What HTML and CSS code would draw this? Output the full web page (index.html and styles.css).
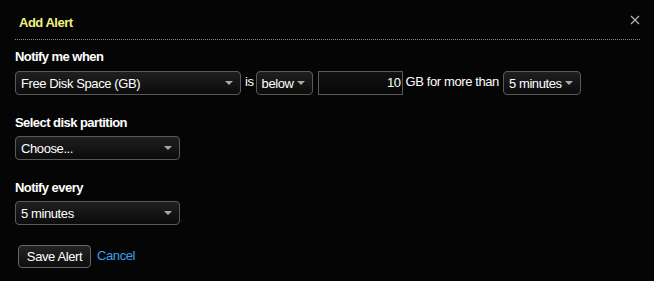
FILE: index.html
```html
<!DOCTYPE html>
<html>
<head>
<meta charset="utf-8">
<link rel="stylesheet" href="styles.css">
</head>
<body>
<div class="modal">
  <div class="header">
    <span class="title">Add Alert</span>
    <svg class="close" width="10" height="10" viewBox="0 0 10 10"><path d="M1 1L9 9M9 1L1 9" stroke="#b0b0b0" stroke-width="1.3"/></svg>
  </div>
  <div class="content">
    <div class="label first">Notify me when</div>
    <div class="row">
      <div class="select w-metric"><span>Free Disk Space (GB)</span><i class="arrow"></i></div>
      <span class="txt is">is</span>
      <div class="select w-op"><span>below</span><i class="arrow"></i></div>
      <div class="input">10</div>
      <span class="txt gb">GB for more than</span>
      <div class="select w-dur"><span>5 minutes</span><i class="arrow"></i></div>
    </div>
    <div class="label">Select disk partition</div>
    <div class="row">
      <div class="select w-wide"><span>Choose...</span><i class="arrow"></i></div>
    </div>
    <div class="label">Notify every</div>
    <div class="row">
      <div class="select w-wide"><span>5 minutes</span><i class="arrow"></i></div>
    </div>
    <div class="actions">
      <div class="btn">Save Alert</div>
      <a class="cancel">Cancel</a>
    </div>
  </div>
</div>
</body>
</html>
```
FILE: styles.css
```css
html, body {
  margin: 0;
  padding: 0;
  background: #050505;
  width: 654px;
  height: 281px;
  overflow: hidden;
}
.modal {
  font-family: "Liberation Sans", Arial, sans-serif;
  font-size: 13px;
  letter-spacing: -0.4px;
  color: #fff;
  white-space: nowrap;
}
.header {
  margin: 0 14px 0 15px;
  border-bottom: 1px dotted #8a8a8a;
  display: flex;
  align-items: flex-start;
  justify-content: space-between;
  box-sizing: border-box;
  height: 40px;
}
.title {
  color: #eef27c;
  font-weight: bold;
  letter-spacing: -0.5px;
  margin: 15px 0 0 4px;
  line-height: 16px;
}
.close {
  margin: 15px 0 0 0;
}
.content {
  padding: 0 15px;
}
.label {
  font-weight: bold;
  letter-spacing: -0.55px;
  line-height: 16px;
  margin-top: 20px;
  margin-bottom: 5px;
}
.label.first {
  margin-top: 9px;
  margin-bottom: 6px;
}
.row {
  display: flex;
  align-items: center;
  height: 24px;
}
.row > * {
  flex-shrink: 0;
}
.select {
  box-sizing: border-box;
  height: 24px;
  border: 1px solid #5a5a5a;
  border-radius: 4px;
  background: linear-gradient(#1f1f1f, #0b0b0b);
  display: flex;
  align-items: center;
  justify-content: space-between;
  padding: 0 7px 0 5px;
}
.arrow {
  width: 0;
  height: 0;
  border-left: 4px solid transparent;
  border-right: 4px solid transparent;
  border-top: 4px solid #a8a8a8;
}
.w-metric { width: 226px; }
.w-op { width: 57px; }
.w-dur { width: 78px; }
.w-wide { width: 165px; }
.txt {
  margin-top: -3px;
}
.is { padding: 0 2px 0 4px; }
.gb { padding: 0 4px 0 3px; }
.w-op + .input { margin-left: 5px; }
.input {
  box-sizing: border-box;
  width: 85px;
  height: 24px;
  border: 1px solid #5a5a5a;
  background: linear-gradient(#121212, #070707);
  text-align: right;
  line-height: 22px;
  padding-right: 1px;
}
.actions {
  display: flex;
  align-items: center;
  margin-top: 20px;
  padding-left: 3px;
}
.btn {
  box-sizing: border-box;
  height: 23px;
  width: 73px;
  border: 1px solid #666;
  border-radius: 4px;
  background: linear-gradient(#232323, #0d0d0d);
  text-align: center;
  line-height: 21px;
}
.cancel {
  color: #3aa0ee;
  margin-left: 6px;
  margin-top: -2px;
}
```
